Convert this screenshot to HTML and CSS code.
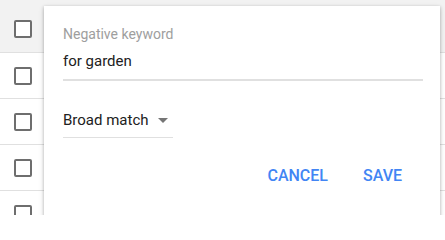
FILE: index.html
```html
<!DOCTYPE html>
<html>
<head>
<meta charset="utf-8">
<link rel="stylesheet" href="styles.css">
</head>
<body>
<div class="page">
  <div class="table">
    <div class="row row-head"><span class="checkbox"></span></div>
    <div class="row"><span class="checkbox"></span></div>
    <div class="row"><span class="checkbox"></span></div>
    <div class="row"><span class="checkbox"></span></div>
    <div class="row"><span class="checkbox"></span></div>
  </div>
  <div class="dialog">
    <div class="field">
      <div class="field-label">Negative keyword</div>
      <div class="field-value">for garden</div>
    </div>
    <div class="select">
      <span class="select-value">Broad match</span>
      <span class="select-arrow"></span>
    </div>
    <div class="actions">
      <button class="btn">CANCEL</button>
      <button class="btn">SAVE</button>
    </div>
  </div>
</div>
</body>
</html>
```

FILE: styles.css
```css
html, body {
  margin: 0;
  padding: 0;
  background: #ffffff;
  font-family: Roboto, "Liberation Sans", Arial, sans-serif;
}

.page {
  position: relative;
  width: 445px;
  height: 215px;
  overflow: hidden;
}

.table {
  display: flex;
  flex-direction: column;
}

.row {
  height: 45px;
  flex-shrink: 0;
  border-bottom: 1px solid #e0e0e0;
  display: flex;
  align-items: center;
  padding-left: 14px;
  background: #ffffff;
}

.row-head {
  height: 52px;
  background: #f2f2f2;
  align-items: flex-start;
}

.row-head .checkbox {
  margin-top: 20px;
}

.checkbox {
  box-sizing: border-box;
  width: 18px;
  height: 18px;
  border: 2px solid #6e6e6e;
  border-radius: 2px;
  background: #ffffff;
}

.dialog {
  position: absolute;
  left: 44px;
  top: 6px;
  width: 396px;
  height: 230px;
  background: #ffffff;
  box-sizing: border-box;
  padding: 20px 17px 0 19px;
  box-shadow: 0 1px 3px rgba(0,0,0,0.25), 0 2px 6px rgba(0,0,0,0.12);
}

.field {
  border-bottom: 2px solid #e0e0e0;
  padding-bottom: 8px;
}

.field-label {
  font-size: 14px;
  line-height: 16px;
  color: #9e9e9e;
}

.field-value {
  margin-top: 9px;
  font-size: 15px;
  line-height: 20px;
  color: #212121;
}

.select {
  margin-top: 29px;
  width: 110px;
  display: flex;
  align-items: center;
  border-bottom: 1px solid #e0e0e0;
  padding-bottom: 7px;
}

.select-value {
  font-size: 15px;
  line-height: 20px;
  color: #212121;
}

.select-arrow {
  margin-left: 9px;
  width: 0;
  height: 0;
  border-left: 5px solid transparent;
  border-right: 5px solid transparent;
  border-top: 5px solid #757575;
}

.actions {
  display: flex;
  justify-content: flex-end;
  gap: 19px;
  margin-top: 24px;
  padding-right: 13px;
}

.btn {
  border: none;
  background: none;
  padding: 4px 8px;
  font-family: Roboto, "Liberation Sans", Arial, sans-serif;
  font-size: 16px;
  font-weight: 500;
  line-height: 20px;
  color: #4285f4;
  cursor: pointer;
}
```
